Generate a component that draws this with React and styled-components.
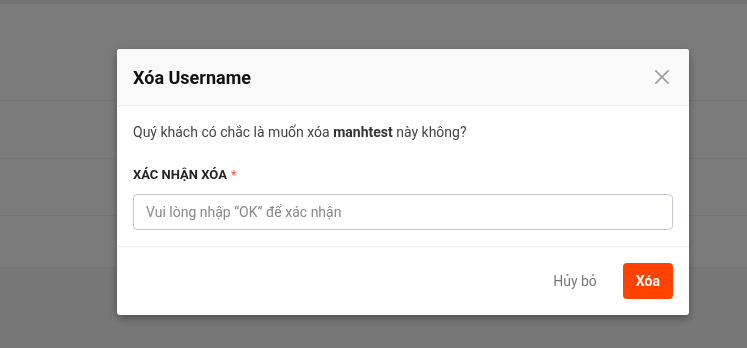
import React from 'react';
import styled, { createGlobalStyle } from 'styled-components';

const GlobalStyle = createGlobalStyle`
  html, body {
    margin: 0;
    padding: 0;
    width: 747px;
    height: 348px;
    overflow: hidden;
    font-family: Roboto, "Liberation Sans", Arial, sans-serif;
    background: #f6f6f6;
  }
  * { box-sizing: border-box; }
`;

// page under the backdrop
const Page = styled.div`
  height: 348px;
  display: flex;
  flex-direction: column;
  background: #f6f6f6;
`;

const TopBar = styled.div`
  height: 4px;
  background: #e8e8e8;
`;

const Row = styled.div`
  height: ${p => p.h}px;
  border-bottom: 1px solid #e9e9e9;
`;

const Footer = styled.div`
  flex: 1;
  background: #eeeeee;
`;

const Backdrop = styled.div`
  position: fixed;
  inset: 0;
  background: rgba(0, 0, 0, 0.5);
  padding: 49px 0 0 117px;
`;

const Modal = styled.div`
  width: 572px;
  background: #fff;
  border-radius: 3px;
  overflow: hidden;
  box-shadow: 0 3px 8px rgba(0, 0, 0, 0.35);
`;

const Header = styled.div`
  height: 57px;
  display: flex;
  align-items: center;
  justify-content: space-between;
  padding: 0 19px 0 16px;
  background: #f9f9f9;
  border-bottom: 1px solid #ececec;
`;

const Title = styled.h2`
  margin: 0;
  font-size: 18px;
  font-weight: 700;
  color: #111;
`;

const CloseButton = styled.button`
  border: 0;
  background: none;
  padding: 0;
  width: 17px;
  height: 17px;
  display: flex;
  align-items: center;
  justify-content: center;
  cursor: pointer;
`;

const Body = styled.div`
  padding: 16px;
  border-bottom: 1px solid #ececec;
`;

const Message = styled.p`
  margin: 0 0 24px;
  font-size: 14px;
  line-height: 20px;
  color: #444;

  strong {
    font-weight: 700;
    color: #333;
  }
`;

const Label = styled.label`
  display: block;
  font-size: 13px;
  line-height: 18px;
  font-weight: 700;
  color: #222;
  text-transform: uppercase;

  span {
    color: #f05050;
    margin-left: 4px;
    font-weight: 400;
  }
`;

const Input = styled.input`
  display: block;
  width: 100%;
  height: 36px;
  margin-top: 10px;
  padding: 0 12px;
  border: 1px solid #c3c7ce;
  border-radius: 4px;
  font-family: inherit;
  font-size: 14px;
  color: #333;
  outline: none;

  &::placeholder {
    color: #888;
  }
`;

const Actions = styled.div`
  height: 68px;
  display: flex;
  align-items: center;
  justify-content: flex-end;
  gap: 26px;
  padding: 0 16px;
`;

const Button = styled.button`
  height: 36px;
  border: 0;
  border-radius: 4px;
  font-family: inherit;
  font-size: 14px;
  cursor: pointer;
  padding: ${p => (p.$primary ? '0 13px' : '0')};
  background: ${p => (p.$primary ? '#ff4200' : 'transparent')};
  color: ${p => (p.$primary ? '#fff' : '#777')};
  font-weight: ${p => (p.$primary ? 700 : 400)};
`;

function CloseIcon() {
  return (
    <svg width="14" height="14" viewBox="0 0 14 14">
      <path d="M1 1 L13 13 M13 1 L1 13" stroke="#999" strokeWidth="1.7" strokeLinecap="square" />
    </svg>
  );
}

export default function App() {
  return (
    <>
      <GlobalStyle />
      <Page>
        <TopBar />
        <Row h={97} />
        <Row h={58} />
        <Row h={57} />
        <Row h={52} />
        <Footer />
      </Page>
      <Backdrop>
        <Modal>
          <Header>
            <Title>Xóa Username</Title>
            <CloseButton aria-label="Đóng">
              <CloseIcon />
            </CloseButton>
          </Header>
          <Body>
            <Message>
              Quý khách có chắc là muốn xóa <strong>manhtest</strong> này không?
            </Message>
            <Label>
              Xác nhận xóa<span>*</span>
            </Label>
            <Input placeholder="Vui lòng nhập “OK” để xác nhận" />
          </Body>
          <Actions>
            <Button>Hủy bỏ</Button>
            <Button $primary>Xóa</Button>
          </Actions>
        </Modal>
      </Backdrop>
    </>
  );
}
